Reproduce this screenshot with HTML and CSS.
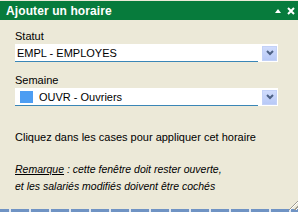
FILE: index.html
```html
<!DOCTYPE html>
<html lang="fr">
<head>
<meta charset="utf-8">
<title>Ajouter un horaire</title>
<link rel="stylesheet" href="styles.css">
</head>
<body>
<div class="panel">
  <div class="titlebar">
    <span class="title">Ajouter un horaire</span>
    <span class="tools">
      <svg class="tri" width="6" height="4" viewBox="0 0 6 4"><path d="M0 4 L3 0 L6 4 Z" fill="#fff"/></svg>
      <svg class="close" width="8" height="8" viewBox="0 0 8 8"><path d="M1 1 L7 7 M7 1 L1 7" stroke="#fff" stroke-width="2"/></svg>
    </span>
  </div>
  <div class="content">
    <div class="label">Statut</div>
    <div class="combo">
      <div class="value">EMPL - EMPLOYES</div>
      <div class="btn"><svg width="8" height="6" viewBox="0 0 8 6"><path d="M1 1 L4 4 L7 1" fill="none" stroke="#4d6185" stroke-width="2"/></svg></div>
    </div>
    <div class="label second">Semaine</div>
    <div class="combo">
      <div class="value"><span class="swatch"></span>OUVR - Ouvriers</div>
      <div class="btn"><svg width="8" height="6" viewBox="0 0 8 6"><path d="M1 1 L4 4 L7 1" fill="none" stroke="#4d6185" stroke-width="2"/></svg></div>
    </div>
    <p class="hint">Cliquez dans les cases pour appliquer cet horaire</p>
    <p class="remark"><u>Remarque</u> : cette fenêtre doit rester ouverte,<br>et les salariés modifiés doivent être cochés</p>
  </div>
  <div class="grip"></div>
  <div class="strip"></div>
</div>
</body>
</html>
```
FILE: styles.css
```css
html, body {
  margin: 0;
  padding: 0;
}
body {
  width: 298px;
  height: 212px;
  overflow: hidden;
  background: #ece9d8;
  font-family: "Liberation Sans", Arial, sans-serif;
  font-size: 11px;
  color: #000;
}
.panel {
  position: relative;
  width: 298px;
  height: 212px;
  display: flex;
  flex-direction: column;
}
.titlebar {
  height: 19px;
  margin-top: 1px;
  background: #077b3c;
  display: flex;
  align-items: center;
  justify-content: space-between;
  padding: 0 3px 0 6px;
  color: #fff;
}
.title {
  font-weight: bold;
  font-size: 12px;
  letter-spacing: 0.1px;
}
.tools {
  display: flex;
  align-items: center;
  gap: 6px;
}
.tri { margin-top: 1px; }
.content {
  flex: 1;
  padding: 9px 20px 0 15px;
}
.label {
  height: 14px;
  line-height: 14px;
}
.label.second {
  margin-top: 11px;
}
.combo {
  margin-top: 1px;
  height: 18px;
  background: #fff;
  display: flex;
  align-items: center;
}
.value {
  flex: 1;
  height: 17px;
  border-bottom: 1px solid #3a86b6;
  display: flex;
  align-items: center;
  padding-left: 2px;
  margin-right: 4px;
}
.swatch {
  width: 13px;
  height: 12px;
  background: #4d9df2;
  margin: 0 6px 0 3px;
}
.btn {
  width: 15px;
  height: 15px;
  margin-right: 1px;
  background: linear-gradient(#d0dcfc, #b8c9f7);
  border: 1px solid #c3d1f7;
  box-sizing: border-box;
  display: flex;
  align-items: center;
  justify-content: center;
}
.hint {
  margin: 24px 0 0 0;
  line-height: 14px;
}
.remark {
  margin: 17px 0 0 0;
  font-style: italic;
  font-size: 10.5px;
  line-height: 17px;
}
.grip {
  position: absolute;
  right: 0;
  bottom: 2px;
  width: 12px;
  height: 12px;
  background: repeating-linear-gradient(135deg, transparent 0 2px, #9c9a90 2px 3px, #fff 3px 4px);
  clip-path: polygon(100% 0, 100% 100%, 0 100%);
}
.strip {
  height: 3px;
  background: repeating-linear-gradient(90deg, #6f93c4 0 9px, #dfe6f0 9px 11px, #6f93c4 11px 20px);
}
```
